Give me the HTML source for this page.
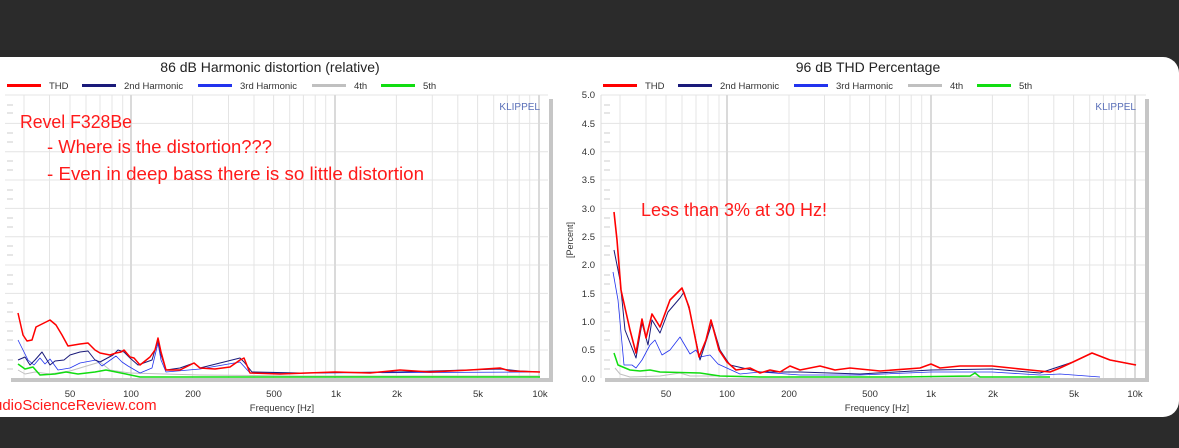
<!DOCTYPE html>
<html><head><meta charset="utf-8"><style>
body{margin:0;width:1179px;height:448px;background:#2b2b2b;overflow:hidden;font-family:"Liberation Sans",sans-serif}
.card{position:absolute;left:-20px;top:57px;width:1199px;height:360px;background:#fff;border-radius:0 16px 16px 0}
svg{position:absolute;left:0;top:0}
</style></head><body>
<div class="card"></div>
<svg width="1179" height="448" font-family="Liberation Sans, sans-serif">
<text x="270" y="72" font-size="14" text-anchor="middle" fill="#222">86 dB Harmonic distortion (relative)</text>
<text x="868" y="72" font-size="14" text-anchor="middle" fill="#222">96 dB THD Percentage</text>
<g font-size="9.5" fill="#333">
<rect x="7" y="84" width="34" height="3" fill="#f00"/><text x="49" y="89">THD</text>
<rect x="82" y="84" width="34" height="3" fill="#1a1a7a"/><text x="124" y="89">2nd Harmonic</text>
<rect x="198" y="84" width="34" height="3" fill="#2233ee"/><text x="240" y="89">3rd Harmonic</text>
<rect x="312" y="84" width="34" height="3" fill="#c0c0c0"/><text x="354" y="89">4th</text>
<rect x="381" y="84" width="34" height="3" fill="#11dd11"/><text x="423" y="89">5th</text>
<rect x="603" y="84" width="34" height="3" fill="#f00"/><text x="645" y="89">THD</text>
<rect x="678" y="84" width="34" height="3" fill="#1a1a7a"/><text x="720" y="89">2nd Harmonic</text>
<rect x="794" y="84" width="34" height="3" fill="#2233ee"/><text x="836" y="89">3rd Harmonic</text>
<rect x="908" y="84" width="34" height="3" fill="#c0c0c0"/><text x="950" y="89">4th</text>
<rect x="977" y="84" width="34" height="3" fill="#11dd11"/><text x="1019" y="89">5th</text>
</g>
<g stroke="#e4e4e4" stroke-width="1">
<path d="M5 95H548M5 123.4H548M5 151.7H548M5 180H548M5 208.4H548M5 236.7H548M5 265H548M5 293.4H548M5 321.7H548M5 350H548"/>
<path d="M24 95V378M49.5 95V378M70 95V378M86 95V378M100 95V378M112 95V378M122.7 95V378M192.6 95V378M228.5 95V378M254 95V378M273.6 95V378M289.7 95V378M303.4 95V378M315.2 95V378M325.7 95V378M396.4 95V378M432.3 95V378M457.8 95V378M477.6 95V378M493.7 95V378M507.4 95V378M519.2 95V378M529.7 95V378"/>
<path d="M601 95H1146M601 123.4H1146M601 151.7H1146M601 180H1146M601 208.4H1146M601 236.7H1146M601 265H1146M601 293.4H1146M601 321.7H1146M601 350H1146"/>
<path d="M620 95V378M646 95V378M666 95V378M682 95V378M696 95V378M708 95V378M719 95V378M789 95V378M824.5 95V378M850 95V378M869.6 95V378M885.7 95V378M899.4 95V378M911.2 95V378M921.7 95V378M992.4 95V378M1028.3 95V378M1053.8 95V378M1073.6 95V378M1089.7 95V378M1103.4 95V378M1115.2 95V378M1125.7 95V378"/>
</g>
<g stroke="#dadada" stroke-width="2">
<path d="M131 95V378M335 95V378M539 95V378M727 95V378M931 95V378M1135 95V378"/>
</g>
<rect x="11" y="378" width="541" height="4" fill="#c6c6c6"/>
<rect x="549" y="99" width="4" height="283" fill="#c6c6c6"/>
<rect x="605" y="378" width="542" height="4" fill="#c6c6c6"/>
<rect x="1145" y="99" width="4" height="283" fill="#c6c6c6"/>
<line x1="601" y1="95" x2="601" y2="378" stroke="#ddd"/>
<g stroke="#ccc"><path d="M7 105h6M7 113h6M7 133h6M7 142h6M7 161h6M7 170h6M7 190h6M7 199h6M7 218h6M7 227h6M7 246h6M7 255h6M7 275h6M7 284h6M7 303h6M7 312h6M7 331h6M7 340h6M7 360h6M7 369h6"/>
<path d="M604 105h6M604 113h6M604 133h6M604 142h6M604 161h6M604 170h6M604 190h6M604 199h6M604 218h6M604 227h6M604 246h6M604 255h6M604 275h6M604 284h6M604 303h6M604 312h6M604 331h6M604 340h6M604 360h6M604 369h6"/></g>
<g font-size="9.5" fill="#333" text-anchor="end">
<text x="595" y="98">5.0</text><text x="595" y="127">4.5</text><text x="595" y="155">4.0</text><text x="595" y="183">3.5</text><text x="595" y="212">3.0</text><text x="595" y="240">2.5</text><text x="595" y="268">2.0</text><text x="595" y="297">1.5</text><text x="595" y="325">1.0</text><text x="595" y="353">0.5</text><text x="595" y="382">0.0</text>
</g>
<text x="573" y="240" font-size="9" fill="#333" transform="rotate(-90 573 240)" text-anchor="middle">[Percent]</text>
<g font-size="9.5" fill="#333" text-anchor="middle">
<text x="70" y="397">50</text><text x="131" y="397">100</text><text x="193" y="397">200</text><text x="274" y="397">500</text><text x="336" y="397">1k</text><text x="397" y="397">2k</text><text x="478" y="397">5k</text><text x="540" y="397">10k</text>
<text x="282" y="411">Frequency [Hz]</text>
<text x="666" y="397">50</text><text x="727" y="397">100</text><text x="789" y="397">200</text><text x="870" y="397">500</text><text x="931" y="397">1k</text><text x="993" y="397">2k</text><text x="1074" y="397">5k</text><text x="1135" y="397">10k</text>
<text x="877" y="411">Frequency [Hz]</text>
</g>
<text x="540" y="110" font-size="10" fill="#5a6fb8" text-anchor="end">KLIPPEL</text>
<text x="1136" y="110" font-size="10" fill="#5a6fb8" text-anchor="end">KLIPPEL</text>
<g fill="#ff1a1a" font-size="18">
<text x="20" y="128" textLength="112" lengthAdjust="spacingAndGlyphs">Revel F328Be</text>
<text x="47" y="153" textLength="225" lengthAdjust="spacingAndGlyphs">- Where is the distortion???</text>
<text x="47" y="180" textLength="377" lengthAdjust="spacingAndGlyphs">- Even in deep bass there is so little distortion</text>
<text x="641" y="216" textLength="186" lengthAdjust="spacingAndGlyphs">Less than 3% at 30 Hz!</text>
</g>
<text x="-6" y="410" font-size="15" fill="#ff1a1a">udioScienceReview.com</text>
<g fill="none" stroke-linejoin="round">
<polyline stroke="#c0c0c0" stroke-width="1" points="18,370 25,374 35,372 50,374 70,371 90,365 100,362 110,370 130,373 200,375 300,376 540,376"/>
<polyline stroke="#2233ee" stroke-width="0.8" points="18,340 28,360 34,365 40,358 45,364 50,359 58,370 70,368 80,363 96,360 102,366 116,356 122,362 128,366 140,373 152,368 158,343 161,360 166,372 200,369 240,362 250,373 300,373 540,372"/>
<polyline stroke="#1a1a7a" stroke-width="1" points="18,360 25,357 30,365 35,360 42,352 50,365 55,361 64,360 70,355 80,352 88,351 95,360 100,362 113,355 118,350 124,352 130,358 138,365 152,360 158,340 161,355 166,370 180,368 194,363 200,368 240,358 244,362 252,372 300,373 400,372 500,369 520,371 540,372"/>
<polyline stroke="#f00" stroke-width="1.5" points="18,313 23,335 27,341 32,340 36,327 44,323 50,320 56,325 62,335 68,346 80,344 88,343 95,350 100,353 110,355 116,353 121,352 124,350 130,357 134,358 140,365 150,357 155,350 158,338 161,352 166,370 172,370 180,370 190,365 194,363 200,368 215,369 230,367 240,360 244,358 250,373 280,374 335,372 370,373 400,370 430,372 470,370 500,368 510,371 540,372"/>
<polyline stroke="#11dd11" stroke-width="1.5" points="18,364 25,369 33,367 40,375 55,374 66,372 78,374 95,372 106,370 126,374 140,377 200,377 300,377 540,377"/>
</g>
<g fill="none" stroke-linejoin="round">
<polyline stroke="#c0c0c0" stroke-width="1" points="615,368 620,374 630,377 660,376 680,373 690,376 730,376 760,377 1050,377"/>
<polyline stroke="#2233ee" stroke-width="0.8" points="613,272 618,300 624,365 632,365 636,368 642,360 650,345 655,340 662,355 670,350 680,337 690,354 696,350 700,357 710,355 718,364 740,374 760,372 800,375 860,375 931,372 992,372 1040,375 1060,374 1100,377"/>
<polyline stroke="#1a1a7a" stroke-width="1" points="614,250 620,280 625,330 636,358 642,323 648,345 652,320 660,333 668,312 680,298 684,292 690,312 700,360 712,323 720,350 730,365 760,372 800,372 860,374 931,370 992,369 1040,373 1073,362 1092,353 1110,360 1136,365"/>
<polyline stroke="#f00" stroke-width="1.6" points="614,212 617,240 621,290 630,330 636,353 642,319 646,338 652,314 660,327 670,300 682,288 689,307 699,357 706,340 711,320 719,350 727,362 736,370 750,368 760,373 770,370 780,372 790,366 800,370 820,366 835,370 850,368 880,371 920,368 931,364 940,368 960,366 992,366 1030,370 1050,372 1060,368 1073,362 1092,353 1110,360 1136,365"/>
<polyline stroke="#11dd11" stroke-width="1.5" points="614,353 618,365 630,370 640,371 650,370 660,372 700,373 720,376 760,377 900,377 970,376 975,373 980,377 1050,377"/>
</g>
</svg>
</body></html>
